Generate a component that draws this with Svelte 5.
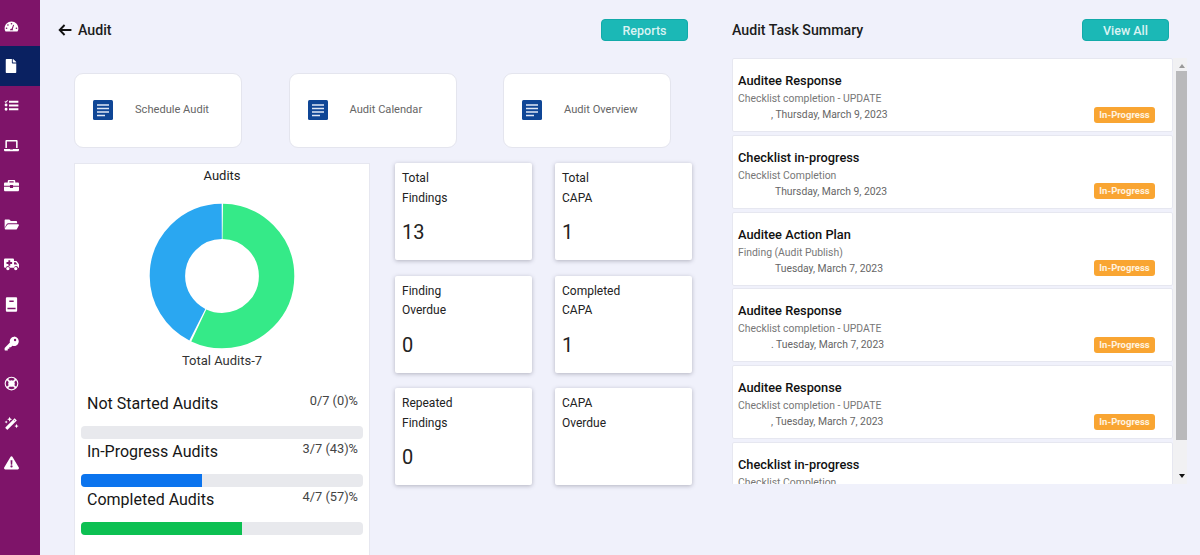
<script>
  const icons = [
    { vb: '0 0 24 24', d: 'M12 4C5.9 4 1 8.9 1 15c0 1.8.4 3.4 1.2 4.6.3.3.6.4 1 .4h17.6c.4 0 .7-.1 1-.4.8-1.2 1.2-2.8 1.2-4.6C23 8.9 18.100 4 12 4zM12 6.200a1.300 1.300 0 1 1 0 2.600 1.300 1.300 0 0 1 0-2.600zM6.300 8.300a1.300 1.300 0 1 1 0 2.600 1.300 1.300 0 0 1 0-2.600zM4.100 13.500a1.300 1.300 0 1 1 0 2.600 1.300 1.300 0 0 1 0-2.600zM19.900 13.500a1.300 1.300 0 1 1 0 2.600 1.300 1.300 0 0 1 0-2.600zM14.700 9.200l1.400.5-2.200 6.500c.5.500.8 1.100.8 1.800H9.500c0-1.300 1.100-2.400 2.500-2.400h.3z' },
    { vb: '0 0 384 512', d: 'M224 136V0H24C10.700 0 0 10.700 0 24v464c0 13.300 10.700 24 24 24h336c13.300 0 24-10.700 24-24V160H248c-13.200 0-24-10.800-24-24zm160-14.100v6.100H256V0h6.100c6.400 0 12.500 2.500 17 7l97.900 98c4.500 4.500 7 10.600 7 16.900z', small: true },
    { vb: '0 0 24 24', d: 'M8 4.500h15v3H8zM8 10.500h15v3H8zM8 16.500h15v3H8zM1 11.200a2.300 2.300 0 1 1 4.600 0 2.300 2.300 0 0 1-4.600 0zM1 18a2.300 2.300 0 1 1 4.600 0 2.300 2.300 0 0 1-4.600 0zM1.800 4.800l1 1 2.400-2.600 1.100 1-3.500 3.800-2-2.100z' },
    { vb: '0 0 24 24', d: 'M4 3h16c1 0 1.800.8 1.800 1.800V16h-2.500V5.500H4.700V16H2.200V4.800C2.200 3.800 3 3 4 3zM0 17.500h9.500c.2.700.8 1 1.500 1h2c.7 0 1.300-.3 1.500-1H24V19c0 1.100-.9 2-2 2H2c-1.100 0-2-.9-2-2z' },
    { vb: '0 0 24 24', d: 'M8 3h8c1.100 0 2 .9 2 2v2h4c1.100 0 2 .9 2 2v3.500H14.500V11h-5v1.500H0V9c0-1.100.9-2 2-2h4V5c0-1.100.9-2 2-2zm.5 2.300V7h7V5.300zM0 14h9.500v2h5v-2H24v5c0 1.100-.9 2-2 2H2c-1.100 0-2-.9-2-2z' },
    { vb: '0 0 24 24', d: 'M2 4h6.500l2.500 2.500h8c1.100 0 2 .9 2 2V10H7c-1.200 0-2.200.6-2.800 1.700L1 17.500V5c0-.6.4-1 1-1zM7 11.500h15.500c1 0 1.700 1.100 1.200 2l-3 5.500c-.4.600-1 1-1.700 1H2.500c-1 0-1.700-1.100-1.200-2l3.700-5.400c.4-.7 1.200-1.100 2-1.100z' },
    { vb: '0 0 24 24', d: 'M2 2.500h12c1.100 0 2 .9 2 2v2h3.200c.5 0 1 .2 1.400.6l2.800 3.500c.4.400.6.9.6 1.400v5h-1.200a3.500 3.500 0 0 0-6.800 0H9.600a3.500 3.500 0 0 0-6.800 0H2c-1.100 0-2-.9-2-2V4.500c0-1.100.9-2 2-2zm5 2.500v3H4v3h3v3h3v-3h3V8h-3V5zM16 8.500V12h5.500l-2.700-3.500zM6.200 15.800a2.700 2.700 0 1 1 0 5.400 2.700 2.700 0 0 1 0-5.400zm12.600 0a2.700 2.700 0 1 1 0 5.400 2.700 2.700 0 0 1 0-5.400z' },
    { vb: '0 0 24 24', d: 'M5 0.500h14c1.100 0 2 .9 2 2v19c0 1.100-.9 2-2 2H5c-1.100 0-2-.9-2-2v-19c0-1.100.9-2 2-2zm3.500 5v2.500h7V5.500zM5.500 17v2.700h13V17z' },
    { vb: '0 0 24 24', d: 'M16 1a7.500 7.500 0 1 1-2.600 14.500L11 18H8.500v2.500H6V23H1.500L1 22.500V19l8.500-8.500A7.500 7.500 0 0 1 16 1zm1.700 3.500a1.900 1.900 0 1 0 0 3.800 1.900 1.900 0 0 0 0-3.800z' },
    { vb: '0 0 24 24', d: 'M12 1a11 11 0 1 1 0 22 11 11 0 0 1 0-22zM6.700 4.700l2.700 2.700a5.200 5.200 0 0 1 5.200 0l2.700-2.700a9 9 0 0 0-10.600 0zM4.700 6.700a9 9 0 0 0 0 10.600l2.700-2.700a5.200 5.200 0 0 1 0-5.200zM19.300 6.700l-2.700 2.700a5.200 5.200 0 0 1 0 5.200l2.700 2.700a9 9 0 0 0 0-10.600zM9.400 16.600l-2.700 2.700a9 9 0 0 0 10.600 0l-2.700-2.700a5.200 5.200 0 0 1-5.200 0z' },
    { vb: '0 0 24 24', d: 'M17 3.500l3.500 3.500L6 21.500c-.4.400-1 .4-1.400 0l-2.100-2.100c-.4-.4-.4-1 0-1.400zM15.700 7.800l.5.500 1.800-1.800-.5-.5zM9 1l1.200 2.800L13 5l-2.800 1.200L9 9 7.800 6.200 5 5l2.800-1.200zM3.500 7l.8 1.700L6 9.500l-1.700.8L3.500 12l-.8-1.700L1 9.500l1.700-.8zM20 12.500l1 2.500 2.500 1-2.500 1-1 2.500-1-2.500-2.500-1 2.500-1z' },
    { vb: '0 0 24 24', d: 'M12 2c.7 0 1.300.4 1.700 1l10 17c.7 1.300-.2 3-1.700 3H2c-1.500 0-2.400-1.700-1.700-3l10-17c.4-.6 1-1 1.700-1zm-1.500 6.500l.4 7h2.200l.4-7zM12 16.500a1.800 1.800 0 1 0 0 3.600 1.800 1.800 0 0 0 0-3.600z' }
  ];
  const shortcuts = ['Schedule Audit', 'Audit Calendar', 'Audit Overview'];
  const stats = [
    ['Total', 'Findings', '13'], ['Total', 'CAPA', '1'],
    ['Finding', 'Overdue', '0'], ['Completed', 'CAPA', '1'],
    ['Repeated', 'Findings', '0'], ['CAPA', 'Overdue', '']
  ];
  const progress = [
    { label: 'Not Started Audits', value: '0/7 (0)%', pct: 0, color: '#0b74ee' },
    { label: 'In-Progress Audits', value: '3/7 (43)%', pct: 43, color: '#0b74ee' },
    { label: 'Completed Audits', value: '4/7 (57)%', pct: 57.2, color: '#0cc052' }
  ];
  const tasks = [
    { title: 'Auditee Response', sub: 'Checklist completion - UPDATE', date: ', Thursday, March 9, 2023', wide: false },
    { title: 'Checklist in-progress', sub: 'Checklist Completion', date: 'Thursday, March 9, 2023', wide: true },
    { title: 'Auditee Action Plan', sub: 'Finding (Audit Publish)', date: 'Tuesday, March 7, 2023', wide: true },
    { title: 'Auditee Response', sub: 'Checklist completion - UPDATE', date: '. Tuesday, March 7, 2023', wide: false },
    { title: 'Auditee Response', sub: 'Checklist completion - UPDATE', date: ', Tuesday, March 7, 2023', wide: false },
    { title: 'Checklist in-progress', sub: 'Checklist Completion', date: 'Thursday, March 9, 2023', wide: true }
  ];
  const R = 54.6;
  const C = 2 * Math.PI * R;
  const greenLen = C * 4 / 7;
  const blueLen = C * 3 / 7;
  const gap = 1.6;
</script>

<div class="page">
  <nav class="sidebar">
    {#each icons as icon, i}
      <div class="nav-item" class:active={i === 1}>
        <svg viewBox={icon.vb} class="nav-icon" class:small={icon.small}><path d={icon.d} fill="#fff" fill-rule="evenodd" /></svg>
      </div>
    {/each}
  </nav>

  <main class="main">
    <section class="left">
      <header class="top">
        <div class="back">
          <svg viewBox="0 0 16 14" class="arrow"><path d="M7.500 1.200 1.800 7l5.700 5.800M2 7h13.500" fill="none" stroke="#111" stroke-width="2.200" /></svg>
          <h1>Audit</h1>
        </div>
        <button class="teal">Reports</button>
      </header>

      <div class="shortcuts">
        {#each shortcuts as s}
          <div class="shortcut">
            <svg viewBox="0 0 20 20" class="doc">
              <rect width="20" height="20" rx="1.500" fill="#0f4696" />
              <path d="M4 5h12M4 8.500h12M4 12h12M4 15.500h8" stroke="#dfe8f6" stroke-width="1.500" />
            </svg>
            <span>{s}</span>
          </div>
        {/each}
      </div>

      <div class="body">
        <div class="audits">
          <div class="audits-title">Audits</div>
          <svg viewBox="0 0 146 146" class="donut">
            <g transform="rotate(-90 73 73)" fill="none" stroke-width="35.400">
              <circle cx="73" cy="73" r={R} stroke="#35ea88" stroke-dasharray="{greenLen - gap} {C}" stroke-dashoffset={-gap / 2} />
              <circle cx="73" cy="73" r={R} stroke="#2aa7f1" stroke-dasharray="{blueLen - gap} {C}" stroke-dashoffset={-(greenLen + gap / 2)} />
            </g>
          </svg>
          <div class="total">Total Audits-7</div>
          {#each progress as p}
            <div class="prog-head">
              <span class="prog-label">{p.label}</span>
              <span class="prog-value">{p.value}</span>
            </div>
            <div class="track"><div class="fill" style="width:{p.pct}%;background:{p.color}"></div></div>
          {/each}
        </div>

        <div class="stats">
          {#each stats as st}
            <div class="stat">
              <div class="stat-label">{st[0]}<br />{st[1]}</div>
              <div class="stat-value">{st[2]}</div>
            </div>
          {/each}
        </div>
      </div>
    </section>

    <section class="right">
      <header class="top top-right">
        <h2>Audit Task Summary</h2>
        <button class="teal">View All</button>
      </header>
      <div class="list-wrap">
        <div class="list">
          {#each tasks as t}
            <article class="task">
              <div class="task-title">{t.title}</div>
              <div class="task-sub">{t.sub}</div>
              <div class="task-foot">
                <div class="task-date" class:wide={t.wide}>{t.date}</div>
                <span class="badge">In-Progress</span>
              </div>
            </article>
          {/each}
        </div>
        <div class="scrollbar">
          <div class="sb-arrow up"></div>
          <div class="thumb"></div>
          <div class="sb-arrow down"></div>
        </div>
      </div>
    </section>
  </main>
</div>

<style>
  :global(body) { margin: 0; background: #f0f1fb; }
  .page {
    display: flex;
    width: 1200px;
    height: 555px;
    overflow: hidden;
    font-family: Roboto, "Liberation Sans", sans-serif;
    background: #f0f1fb;
  }
  .sidebar {
    width: 40px;
    flex: none;
    background: #7e1469;
    padding-top: 6.500px;
    box-sizing: border-box;
  }
  .nav-item {
    height: 39.700px;
    display: flex;
    align-items: center;
    padding-left: 4px;
  }
  .nav-item.active { background: #0a2161; }
  .nav-icon { width: 15px; height: 15px; display: block; }
  .nav-icon.small { height: 14px; width: 14px; }
  .main { flex: 1; display: flex; min-width: 0; }
  .left { width: 648px; flex: none; padding-left: 18px; box-sizing: border-box; }
  .top {
    display: flex;
    align-items: center;
    justify-content: space-between;
    height: 22px;
    margin-top: 19px;
  }
  .back { display: flex; align-items: center; gap: 6px; }
  .arrow { width: 14px; height: 12px; }
  h1, h2 { margin: 0; font-size: 14.200px; font-weight: 500; color: #1c1c1c; }
  .teal {
    width: 87px;
    height: 22px;
    padding: 0;
    background: #1bb8b6;
    border: 1px solid #12aaa9;
    border-radius: 4px;
    color: #d9f3f3;
    font: 500 12.500px Roboto, sans-serif;
  }
  .shortcuts {
    display: flex;
    gap: 46.500px;
    margin: 32px 0 0 16px;
  }
  .shortcut {
    width: 168px;
    height: 75px;
    box-sizing: border-box;
    background: #fff;
    border: 1px solid #e4e5ee;
    border-radius: 9px;
    display: flex;
    align-items: center;
    padding: 0 0 2px 18px;
    color: #666;
    font-size: 11.100px;
  }
  .doc { width: 20px; height: 20px; margin-right: 22px; flex: none; }
  .body { display: flex; margin: 15px 0 0 16px; align-items: flex-start; }
  .audits {
    width: 296px;
    height: 420px;
    flex: none;
    box-sizing: border-box;
    background: #fff;
    border: 1px solid #e6e7f0;
    padding: 0 6px;
    text-align: center;
  }
  .audits-title { font-size: 13px; line-height: 16px; margin-top: 4px; color: #222; }
  .donut { width: 146px; height: 146px; display: block; margin: 19px auto 0; }
  .total { font-size: 13px; line-height: 16px; margin-top: 4px; color: #333; margin-bottom: 24px; }
  .prog-head {
    display: flex;
    justify-content: space-between;
    padding: 0 5px 0 6px;
    height: 24px;
    align-items: flex-start;
    margin-bottom: 9px;
  }
  .prog-label { font-size: 16px; line-height: 22px; color: #161616; }
  .prog-value { font-size: 12.800px; line-height: 16px; color: #444; }
  .track {
    height: 13px;
    background: #e8e9ed;
    border-radius: 4px;
    overflow: hidden;
    margin-bottom: 2px;
  }
  .fill { height: 100%; }
  .stats {
    display: grid;
    grid-template-columns: 137px 137px;
    grid-auto-rows: 97px;
    column-gap: 23px;
    row-gap: 15.500px;
    margin-left: 25px;
  }
  .stat {
    background: #fff;
    border-radius: 2px;
    box-shadow: 0 1px 4px rgba(60, 60, 80, 0.35);
    padding: 6px 7px;
    box-sizing: border-box;
    color: #222;
  }
  .stat-label { font-size: 12px; line-height: 19.500px; }
  .stat-value { font-size: 20px; line-height: 24px; margin-top: 12px; }
  .right { width: 455px; flex: none; margin-left: 44px; }
  .top-right { padding-right: 18px; }
  .list-wrap { display: flex; margin-top: 17px; height: 426px; overflow: hidden; }
  .list { width: 441px; flex: none; overflow: hidden; display: flex; flex-direction: column; gap: 2.800px; }
  .task {
    height: 74px;
    flex: none;
    box-sizing: border-box;
    background: #fff;
    border: 1px solid #e6e7f0;
    border-radius: 2px;
    padding: 13px 17px 0 5px;
  }
  .task-title { font-size: 12.800px; line-height: 17px; font-weight: 500; color: #111; }
  .task-sub { font-size: 10.400px; line-height: 15px; margin-top: 2px; color: #777; }
  .task-foot { display: flex; justify-content: space-between; align-items: center; height: 17px; }
  .task-date { font-size: 10.350px; padding-left: 33px; color: #666; }
  .task-date.wide { padding-left: 37px; }
  .badge {
    width: 61px;
    height: 16px;
    background: #f9a532;
    border-radius: 3px;
    color: #fff3e0;
    font-size: 9.500px;
    font-weight: 700;
    line-height: 16px;
    text-align: center;
  }
  .scrollbar {
    width: 14px;
    flex: none;
    background: #f1f1f3;
    display: flex;
    flex-direction: column;
    align-items: center;
  }
  .thumb { width: 11px; height: 369px; background: #b9b9bb; margin-left: 3px; }
  .sb-arrow { width: 0; height: 0; border-left: 3.500px solid transparent; border-right: 3.500px solid transparent; margin-left: 3px; }
  .sb-arrow.up { border-bottom: 4px solid #999; margin-top: 6px; margin-bottom: 3px; }
  .sb-arrow.down { border-top: 4px solid #111; margin-top: 34px; }
</style>
